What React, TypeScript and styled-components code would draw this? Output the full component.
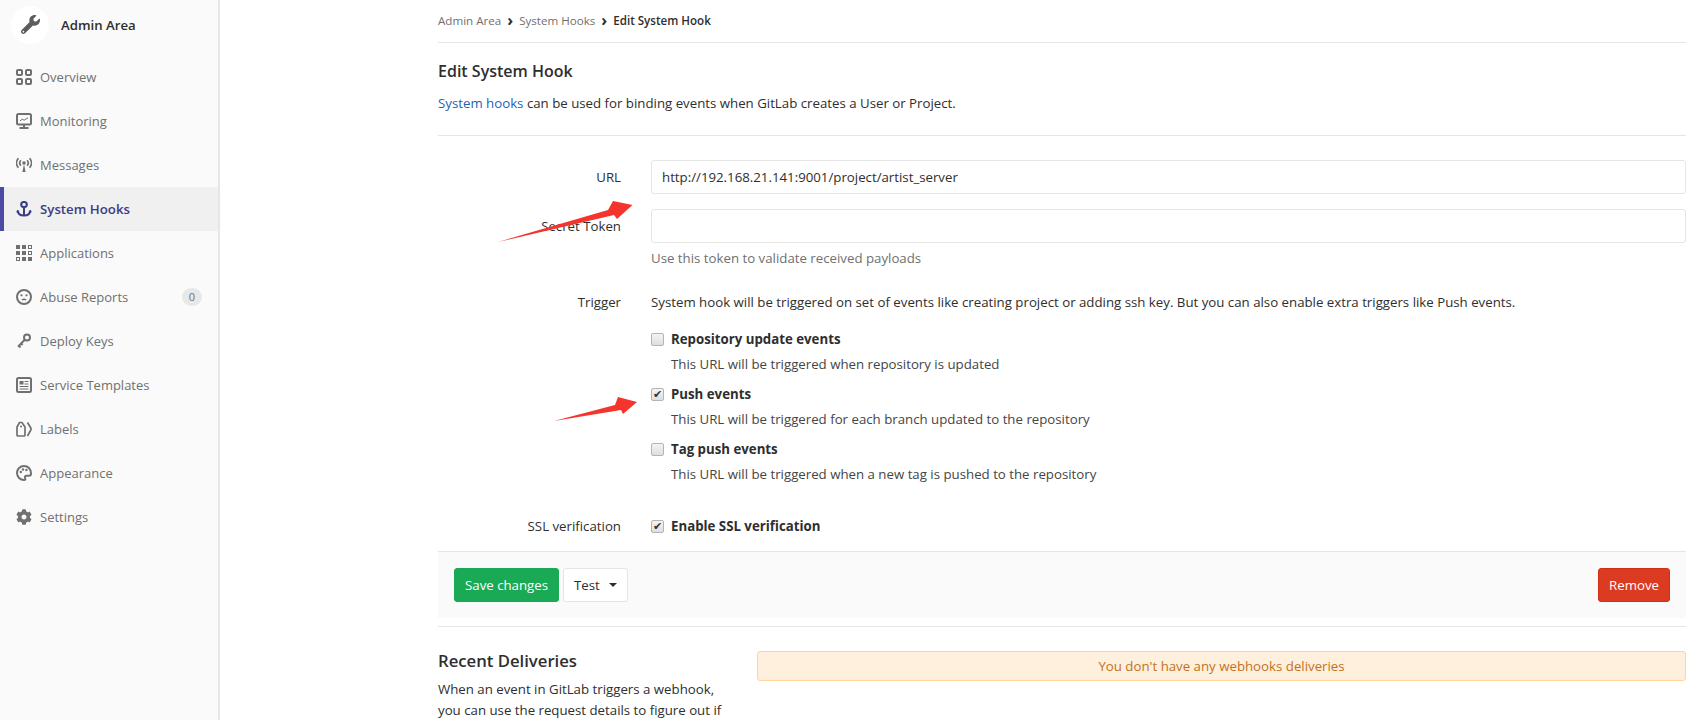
import React from 'react';
import styled, { createGlobalStyle } from 'styled-components';
import { FaWrench, FaCog } from 'react-icons/fa';

const GlobalStyle = createGlobalStyle`
  html, body {
    margin: 0;
    height: 100%;
    overflow: hidden;
    background: #fff;
  }
  body {
    font-family: 'Open Sans', 'Noto Sans', sans-serif;
    font-size: 13px;
    color: #2e2e2e;
  }
  * {
    box-sizing: border-box;
  }
`;

const OverviewIcon = () => (
  <svg width="16" height="16" viewBox="0 0 16 16" fill="none" stroke="currentColor" strokeWidth="2">
    <rect x="1" y="1" width="5" height="5" rx="1" />
    <rect x="10" y="1" width="5" height="5" rx="1" />
    <rect x="1" y="10" width="5" height="5" rx="1" />
    <rect x="10" y="10" width="5" height="5" rx="1" />
  </svg>
);

const MonitoringIcon = () => (
  <svg width="16" height="16" viewBox="0 0 16 16" fill="none" stroke="currentColor">
    <rect x="1" y="1" width="14" height="10.5" rx="1.5" strokeWidth="2" />
    <path d="M4 8l2.2-1.8 2 1L12 4.8" strokeWidth="1" />
    <path d="M8 12v2M3.5 15h9" strokeWidth="2" />
  </svg>
);

const MessagesIcon = () => (
  <svg width="16" height="16" viewBox="0 0 16 16" fill="none" stroke="currentColor" strokeWidth="1.7">
    <circle cx="8" cy="6" r="1.8" fill="currentColor" stroke="none" />
    <path d="M8 7l-1.6 8h3.2z" fill="currentColor" stroke="none" />
    <path d="M4.9 3.2a4.2 4.2 0 0 0 0 5.6M11.1 3.2a4.2 4.2 0 0 1 0 5.6" />
    <path d="M2.4 1.2a7.4 7.4 0 0 0 0 9.6M13.6 1.2a7.4 7.4 0 0 1 0 9.6" />
  </svg>
);

const AnchorIcon = () => (
  <svg width="16" height="16" viewBox="0 0 16 16" fill="none" stroke="currentColor" strokeWidth="2">
    <rect x="5.2" y="1" width="5.6" height="5" rx="2.5" />
    <path d="M8 6v8.5" />
    <path d="M1.8 9.5c0 3.4 2.6 5 6.2 5s6.2-1.6 6.2-5" />
    <path d="M0 11.2l1.8-2.4 1.8 2.4zM12.4 11.2l1.8-2.4 1.8 2.4z" fill="currentColor" stroke="none" />
  </svg>
);

const ApplicationsIcon = () => (
  <svg width="16" height="16" viewBox="0 0 16 16" fill="currentColor">
    <rect x="0" y="0" width="4" height="4" />
    <rect x="6" y="0" width="4" height="4" />
    <rect x="12.5" y="0.5" width="3" height="3" fill="none" stroke="currentColor" />
    <rect x="0" y="6" width="4" height="4" />
    <rect x="6" y="6" width="4" height="4" />
    <rect x="12.5" y="6.5" width="3" height="3" fill="none" stroke="currentColor" />
    <rect x="0.5" y="12.5" width="3" height="3" fill="none" stroke="currentColor" />
    <rect x="6" y="12" width="4" height="4" />
    <rect x="12" y="12" width="4" height="4" />
  </svg>
);

const AbuseIcon = () => (
  <svg width="16" height="16" viewBox="0 0 16 16" fill="none" stroke="currentColor">
    <circle cx="8" cy="8" r="7" strokeWidth="2" />
    <circle cx="5.5" cy="6.3" r="1.1" fill="currentColor" stroke="none" />
    <circle cx="10.5" cy="6.3" r="1.1" fill="currentColor" stroke="none" />
    <path d="M5.8 11c1.3-.9 3.1-.9 4.4 0" strokeWidth="1.3" />
  </svg>
);

const KeyIcon = () => (
  <svg width="16" height="16" viewBox="0 0 16 16" fill="none" stroke="currentColor">
    <circle cx="11" cy="4.6" r="3" strokeWidth="2" />
    <path d="M8.8 6.8L2 13.6" strokeWidth="2" />
    <path d="M2.5 12.5L4.5 14.5M4.8 10.2L6.6 12" strokeWidth="1.8" />
  </svg>
);

const TemplatesIcon = () => (
  <svg width="16" height="16" viewBox="0 0 16 16" fill="none" stroke="currentColor">
    <rect x="1" y="1" width="14" height="14" rx="1.5" strokeWidth="2" />
    <rect x="3.5" y="4" width="4" height="3.5" fill="currentColor" stroke="none" />
    <path d="M8.5 4.5h4M8.5 7h4M3.5 9.5h9M3.5 12h9" strokeWidth="1.2" />
  </svg>
);

const LabelsIcon = () => (
  <svg width="16" height="16" viewBox="0 0 16 16" fill="none" stroke="currentColor" strokeWidth="1.7">
    <path d="M1 6l2.5-4.5h2.5L9 6v8a1 1 0 0 1-1 1H2a1 1 0 0 1-1-1z" />
    <circle cx="5" cy="5.5" r="1" fill="currentColor" stroke="none" />
    <path d="M11.5 1.5l3.3 5.5c.4.8.4 1.2 0 2L11.5 15" />
  </svg>
);

const AppearanceIcon = () => (
  <svg width="16" height="16" viewBox="0 0 16 16" fill="none" stroke="currentColor">
    <path d="M8 1a7 7 0 1 0 0 14c1.5 0 1.6-1 1.1-2-.6-1.2.2-2.3 1.5-2.3H13c1.2 0 2-.8 2-2.2C15 4 12 1 8 1z" strokeWidth="2" />
    <circle cx="4.8" cy="7" r="1.2" fill="currentColor" stroke="none" />
    <circle cx="7" cy="4.5" r="1.2" fill="currentColor" stroke="none" />
    <circle cx="10.4" cy="5" r="1.2" fill="currentColor" stroke="none" />
  </svg>
);

const ArrowOne = () => (
  <svg width="140" height="48" viewBox="0 0 140 48" fill="#f5342e">
    <path d="M1 44L111 12 116 3 135.5 7 120 21 117 17z" />
  </svg>
);

const ArrowTwo = () => (
  <svg width="84" height="26" viewBox="0 0 84 26" fill="#f5342e">
    <path d="M0 24L61 8 64 0 83 5 69 17 67 13z" />
  </svg>
);

const navItems = [
  { label: 'Overview', icon: <OverviewIcon /> },
  { label: 'Monitoring', icon: <MonitoringIcon /> },
  { label: 'Messages', icon: <MessagesIcon /> },
  { label: 'System Hooks', icon: <AnchorIcon />, active: true },
  { label: 'Applications', icon: <ApplicationsIcon /> },
  { label: 'Abuse Reports', icon: <AbuseIcon />, badge: '0' },
  { label: 'Deploy Keys', icon: <KeyIcon /> },
  { label: 'Service Templates', icon: <TemplatesIcon /> },
  { label: 'Labels', icon: <LabelsIcon /> },
  { label: 'Appearance', icon: <AppearanceIcon /> },
  { label: 'Settings', icon: <FaCog size={16} /> },
];

const triggers = [
  { title: 'Repository update events', help: 'This URL will be triggered when repository is updated', checked: false },
  { title: 'Push events', help: 'This URL will be triggered for each branch updated to the repository', checked: true },
  { title: 'Tag push events', help: 'This URL will be triggered when a new tag is pushed to the repository', checked: false },
];

const App: React.FC = () => {
  return (
    <Page>
      <GlobalStyle />
      <Sidebar>
        <Brand>
          <BrandAvatar>
            <FaWrench size={19} />
          </BrandAvatar>
          <span>Admin Area</span>
        </Brand>
        {navItems.map((item) => (
          <NavItem key={item.label} $active={item.active}>
            <NavIcon>{item.icon}</NavIcon>
            <span>{item.label}</span>
            {item.badge && <Badge>{item.badge}</Badge>}
          </NavItem>
        ))}
      </Sidebar>
      <Main>
        <Breadcrumbs>
          <Crumb>Admin Area</Crumb>
          <Chevron>›</Chevron>
          <Crumb>System Hooks</Crumb>
          <Chevron>›</Chevron>
          <Crumb $current>Edit System Hook</Crumb>
        </Breadcrumbs>
        <Intro>
          <Title>Edit System Hook</Title>
          <p>
            <a>System hooks</a> can be used for binding events when GitLab creates a User or Project.
          </p>
        </Intro>
        <Form>
          <FieldLabel>URL</FieldLabel>
          <TextInput readOnly value="http://192.168.21.141:9001/project/artist_server" />
          <FieldLabel>Secret Token</FieldLabel>
          <SecretField>
            <TextInput readOnly value="" />
            <HelpText>Use this token to validate received payloads</HelpText>
          </SecretField>
          <TriggerLabel>Trigger</TriggerLabel>
          <div>
            <TriggerIntro>
              System hook will be triggered on set of events like creating project or adding ssh key. But you can also enable extra triggers like Push events.
            </TriggerIntro>
            {triggers.map((t) => (
              <Trigger key={t.title}>
                <CheckRow>
                  <Check type="checkbox" readOnly checked={t.checked} />
                  <strong>{t.title}</strong>
                </CheckRow>
                <TriggerHelp>{t.help}</TriggerHelp>
              </Trigger>
            ))}
          </div>
          <SslLabel>SSL verification</SslLabel>
          <SslRow>
            <Check type="checkbox" readOnly checked />
            <strong>Enable SSL verification</strong>
          </SslRow>
        </Form>
        <Actions>
          <Button $variant="save">Save changes</Button>
          <Button>
            Test
            <Caret />
          </Button>
          <Button $variant="remove">Remove</Button>
        </Actions>
        <Deliveries>
          <DeliveriesInfo>
            <h4>Recent Deliveries</h4>
            <p>When an event in GitLab triggers a webhook, you can use the request details to figure out if</p>
          </DeliveriesInfo>
          <Alert>You don't have any webhooks deliveries</Alert>
        </Deliveries>
      </Main>
      <ArrowUrl>
        <ArrowOne />
      </ArrowUrl>
      <ArrowPush>
        <ArrowTwo />
      </ArrowPush>
    </Page>
  );
};

const Page = styled.div`
  position: relative;
  display: flex;
  height: 720px;
  overflow: hidden;
`;

const Sidebar = styled.nav`
  flex: 0 0 220px;
  height: 720px;
  background: #fafafa;
  border-right: 2px solid #e6e6e6;
`;

const Brand = styled.div`
  display: flex;
  align-items: center;
  gap: 12px;
  height: 55px;
  padding: 0 0 6px 11px;
  font-size: 13.2px;
  font-weight: 600;
  color: #2e2e2e;
`;

const BrandAvatar = styled.div`
  display: flex;
  align-items: center;
  justify-content: center;
  width: 38px;
  height: 38px;
  border-radius: 50%;
  background: #fff;
  color: #5c5c5c;
`;

const NavItem = styled.div<{ $active?: boolean }>`
  display: flex;
  align-items: center;
  gap: 8px;
  height: 44px;
  padding-left: ${(p) => (p.$active ? '12px' : '16px')};
  border-left: ${(p) => (p.$active ? '4px solid #4b4ba3' : 'none')};
  background: ${(p) => (p.$active ? '#f0f0f0' : 'transparent')};
  color: ${(p) => (p.$active ? '#3b3b85' : '#707070')};
  font-size: ${(p) => (p.$active ? '13.25px' : '13px')};
  font-weight: ${(p) => (p.$active ? 600 : 400)};
`;

const NavIcon = styled.span`
  display: flex;
  width: 16px;
  color: inherit;

  svg {
    display: block;
  }
`;

const Badge = styled.span`
  margin-left: auto;
  margin-right: 16px;
  width: 20px;
  height: 18px;
  border-radius: 9px;
  background: #e8e8e8;
  color: #707070;
  font-size: 11px;
  line-height: 18px;
  text-align: center;
`;

const Main = styled.main`
  flex: 1;
  min-width: 0;
  padding: 0 13px 0 218px;
  font-size: 13.25px;
`;

const Breadcrumbs = styled.div`
  display: flex;
  align-items: center;
  gap: 6px;
  height: 43px;
  padding-bottom: 2px;
  border-bottom: 1px solid #e5e5e5;
  font-size: 11.6px;
`;

const Crumb = styled.span<{ $current?: boolean }>`
  color: ${(p) => (p.$current ? '#2e2e2e' : '#707070')};
  font-weight: ${(p) => (p.$current ? 600 : 400)};
`;

const Chevron = styled.span`
  color: #2e2e2e;
  font-size: 16px;
  font-weight: 700;
  line-height: 1;
`;

const Intro = styled.header`
  height: 93px;
  border-bottom: 1px solid #e5e5e5;
  padding-top: 17px;

  p {
    margin: 12px 0 0;
    line-height: 18px;
  }

  a {
    color: #1f5fb4;
  }
`;

const Title = styled.h3`
  margin: 0;
  font-size: 16px;
  line-height: 22px;
  font-weight: 600;
`;

const Form = styled.div`
  display: grid;
  grid-template-columns: 183px 1fr;
  column-gap: 30px;
  padding-top: 24px;
`;

const FieldLabel = styled.label`
  padding-top: 8px;
  text-align: right;
  color: #2e2e2e;
`;

const TextInput = styled.input`
  display: block;
  width: 100%;
  height: 34px;
  margin-bottom: 15px;
  padding: 0 10px;
  border: 1px solid #e5e5e5;
  border-radius: 3px;
  background: #fff;
  font: inherit;
  color: #2e2e2e;
  outline: none;
`;

const SecretField = styled.div`
  padding-bottom: 26px;
`;

const HelpText = styled.div`
  margin-top: -9px;
  line-height: 18px;
  color: #707070;
`;

const TriggerLabel = styled(FieldLabel)`
  padding-top: 0;
  line-height: 18px;
`;

const TriggerIntro = styled.p`
  margin: 0 0 19px;
  line-height: 18px;
`;

const Trigger = styled.div`
  height: 55px;
`;

const CheckRow = styled.label`
  display: flex;
  align-items: center;
  gap: 7px;
  height: 18px;
  font-weight: 600;

  strong {
    font-weight: 700;
  }
`;

const Check = styled.input`
  appearance: none;
  position: relative;
  flex: none;
  width: 13px;
  height: 13px;
  margin: 0;
  border: 1px solid #b4b4b4;
  border-radius: 2px;
  background: linear-gradient(#f4f4f4, #dedede);

  &:checked::after {
    content: '✔';
    position: absolute;
    left: 1px;
    top: -2px;
    font-size: 11px;
    line-height: 14px;
    color: #333;
  }
`;

const TriggerHelp = styled.div`
  margin: 7px 0 0 20px;
  line-height: 18px;
  color: #454545;
`;

const SslLabel = styled(FieldLabel)`
  padding-top: 22px;
`;

const SslRow = styled(CheckRow)`
  height: 18px;
  margin-top: 22px;
`;

const Actions = styled.div`
  display: flex;
  align-items: center;
  gap: 4px;
  height: 67px;
  margin-top: 16px;
  padding: 0 16px 1px;
  border-top: 1px solid #e5e5e5;
  background: #fafafa;
`;

const Button = styled.button<{ $variant?: 'save' | 'remove' }>`
  display: inline-flex;
  align-items: center;
  height: 34px;
  padding: 0 10px;
  border: 1px solid ${(p) => (p.$variant === 'save' ? '#1aaa55' : p.$variant === 'remove' ? '#d22f16' : '#e5e5e5')};
  border-radius: 3px;
  background: ${(p) => (p.$variant === 'save' ? '#1aaa55' : p.$variant === 'remove' ? '#db3b21' : '#fff')};
  color: ${(p) => (p.$variant ? '#fff' : '#2e2e2e')};
  font: inherit;
  margin-left: ${(p) => (p.$variant === 'remove' ? 'auto' : '0')};
`;

const Caret = styled.span`
  margin-left: 9px;
  border-left: 4px solid transparent;
  border-right: 4px solid transparent;
  border-top: 4px solid #2e2e2e;
`;

const Deliveries = styled.section`
  display: grid;
  grid-template-columns: 289px 1fr;
  column-gap: 30px;
  margin-top: 8px;
  padding-top: 24px;
  border-top: 1px solid #e5e5e5;
`;

const DeliveriesInfo = styled.div`
  h4 {
    margin: 0;
    font-size: 16.7px;
    line-height: 20px;
    font-weight: 600;
  }

  p {
    margin: 8px 0 0;
    line-height: 21px;
  }
`;

const Alert = styled.div`
  height: 30px;
  border: 1px solid #fed69b;
  border-radius: 3px;
  background: #fef0dc;
  color: #c4701c;
  line-height: 28px;
  text-align: center;
`;

const ArrowUrl = styled.div`
  position: absolute;
  left: 497px;
  top: 198px;
  line-height: 0;
`;

const ArrowPush = styled.div`
  position: absolute;
  left: 554px;
  top: 397px;
  line-height: 0;
`;

export default App;
